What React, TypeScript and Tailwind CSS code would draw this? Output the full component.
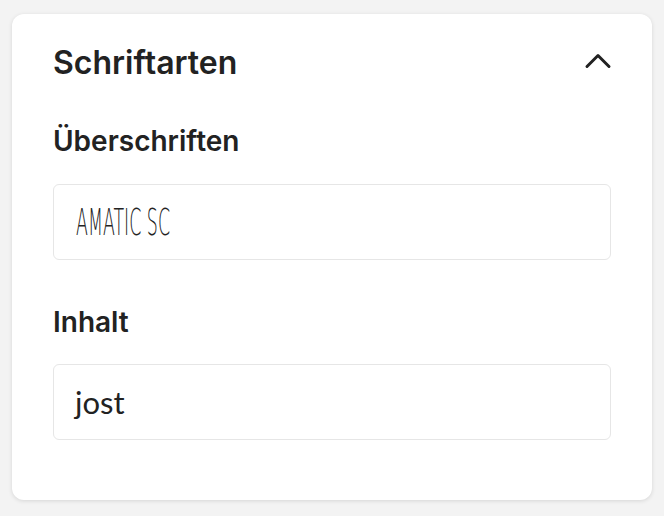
export default function App() {
  return (
    <div className="min-h-screen bg-[#f3f3f3] px-3 pt-[14px] font-['Inter','Liberation_Sans',sans-serif] text-[#222]">
      <div className="w-[640px] rounded-xl bg-white px-[41px] pb-[60px] pt-[29px] shadow-[0_1px_4px_rgba(0,0,0,0.12)]">
        <div className="flex h-10 items-center justify-between">
          <h2 className="text-[32px] font-semibold leading-10">Schriftarten</h2>
          <svg width="28" height="17" viewBox="0 0 28 17" fill="none" className="mb-[5px] mr-[-1px]">
            <polyline
              points="3,14.5 14,3.5 25,14.5"
              stroke="#222"
              strokeWidth="3"
              strokeLinecap="round"
              strokeLinejoin="round"
            />
          </svg>
        </div>

        <label className="mt-10 block text-[28px] font-semibold leading-9">Überschriften</label>
        <div className="mt-[25px] flex h-[76px] items-center overflow-hidden rounded-md border border-[#e6e6e6] pl-[22px]">
          <span className="origin-left scale-x-[0.47] whitespace-nowrap font-['DejaVu_Sans',sans-serif] text-[37px] font-extralight leading-none text-[#222]">
            AMATIC SC
          </span>
        </div>

        <label className="mt-11 block text-[28px] font-semibold leading-9">Inhalt</label>
        <div className="mt-6 flex h-[76px] items-center rounded-md border border-[#e6e6e6] pl-[21px]">
          <span className="font-['Lato',sans-serif] text-[31px] leading-none text-[#222]">jost</span>
        </div>
      </div>
    </div>
  );
}
